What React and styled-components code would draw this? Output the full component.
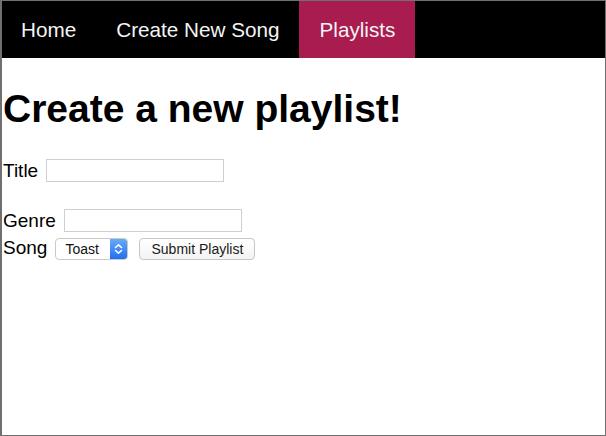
import React from 'react';
import styled, { createGlobalStyle } from 'styled-components';

const GlobalStyle = createGlobalStyle`
    html, body {
        margin: 0;
        padding: 0;
        background: #fff;
    }
    body {
        font-family: "Liberation Sans", Arial, Helvetica, sans-serif;
        color: #000;
    }
`;

const navItems = ['Home', 'Create New Song', 'Playlists'];

const Chevrons = () => (
    <svg width="9" height="12" viewBox="0 0 9 12" fill="none" stroke="#fff" strokeWidth="1.6" strokeLinecap="round" strokeLinejoin="round">
        <polyline points="1.5,4.5 4.5,1.8 7.5,4.5" />
        <polyline points="1.5,7.5 4.5,10.2 7.5,7.5" />
    </svg>
);

const App = () => {
    const active = 'Playlists';

    return (
        <Frame>
            <GlobalStyle />
            <NavBar>
                {navItems.map(item => (
                    <NavItem key={item} active={item === active}>{item}</NavItem>
                ))}
            </NavBar>
            <Main>
                <Heading>Create a new playlist!</Heading>
                <Row top={28}>
                    <Label>Title</Label>
                    <TextInput type="text" />
                </Row>
                <Row top={27}>
                    <Label>Genre</Label>
                    <TextInput type="text" />
                </Row>
                <Row top={5} baseline>
                    <Label>Song</Label>
                    <SelectBox>
                        <Select defaultValue="Toast">
                            <option>Toast</option>
                        </Select>
                        <SelectArrow><Chevrons /></SelectArrow>
                    </SelectBox>
                    <SubmitButton type="button">Submit Playlist</SubmitButton>
                </Row>
            </Main>
        </Frame>
    );
};

export default App;

const Frame = styled.div`
    box-sizing: border-box;
    width: 606px;
    height: 436px;
    border: 1px solid #707070;
    border-left-width: 2px;
    background: #fff;
    overflow: hidden;
`;

const NavBar = styled.nav`
    display: flex;
    height: 57px;
    background: #000;
`;

const NavItem = styled.a`
    display: flex;
    align-items: center;
    padding: 0 20px;
    font-size: 20.7px;
    color: #f4f4f4;
    background: ${p => (p.active ? '#a81c50' : 'transparent')};
    cursor: pointer;
    &:first-child {
        padding-left: 19px;
    }
`;

const Main = styled.main`
    padding-left: 1px;
`;

const Heading = styled.h1`
    margin: 28px 0 0;
    font-size: 39px;
    font-weight: bold;
    line-height: 45px;
`;

const Row = styled.div`
    display: flex;
    align-items: ${p => (p.baseline ? 'baseline' : 'center')};
    margin-top: ${p => p.top}px;
    height: 23px;
`;

const Label = styled.span`
    font-size: 19px;
    line-height: 22px;
    margin-right: 8px;
`;

const TextInput = styled.input`
    box-sizing: border-box;
    width: 178px;
    height: 23px;
    margin: 0;
    border: 1px solid #cfcfcf;
    border-radius: 0;
    padding: 0 4px;
    background: #fff;
    outline: none;
`;

const SelectBox = styled.div`
    box-sizing: border-box;
    display: flex;
    align-items: stretch;
    width: 73px;
    height: 22px;
    border: 1px solid #c9c9c9;
    border-radius: 4px;
    background: #fff;
    overflow: hidden;
    margin-right: 11px;
`;

const Select = styled.select`
    appearance: none;
    -webkit-appearance: none;
    flex: 1;
    min-width: 0;
    margin: 0;
    border: none;
    background: transparent;
    padding: 0 0 0 9px;
    font-family: "Liberation Sans", Arial, sans-serif;
    font-size: 14px;
    color: #111;
    outline: none;
`;

const SelectArrow = styled.span`
    display: flex;
    align-items: center;
    justify-content: center;
    width: 17px;
    background: linear-gradient(#6aaaf9, #1f6ff0);
`;

const SubmitButton = styled.button`
    box-sizing: border-box;
    height: 22px;
    width: 116px;
    margin: 0;
    padding: 0;
    border: 1px solid #c6c6c6;
    border-radius: 4px;
    background: linear-gradient(#ffffff, #f3f3f3);
    font-family: "Liberation Sans", Arial, sans-serif;
    font-size: 14px;
    color: #1a1a1a;
`;
